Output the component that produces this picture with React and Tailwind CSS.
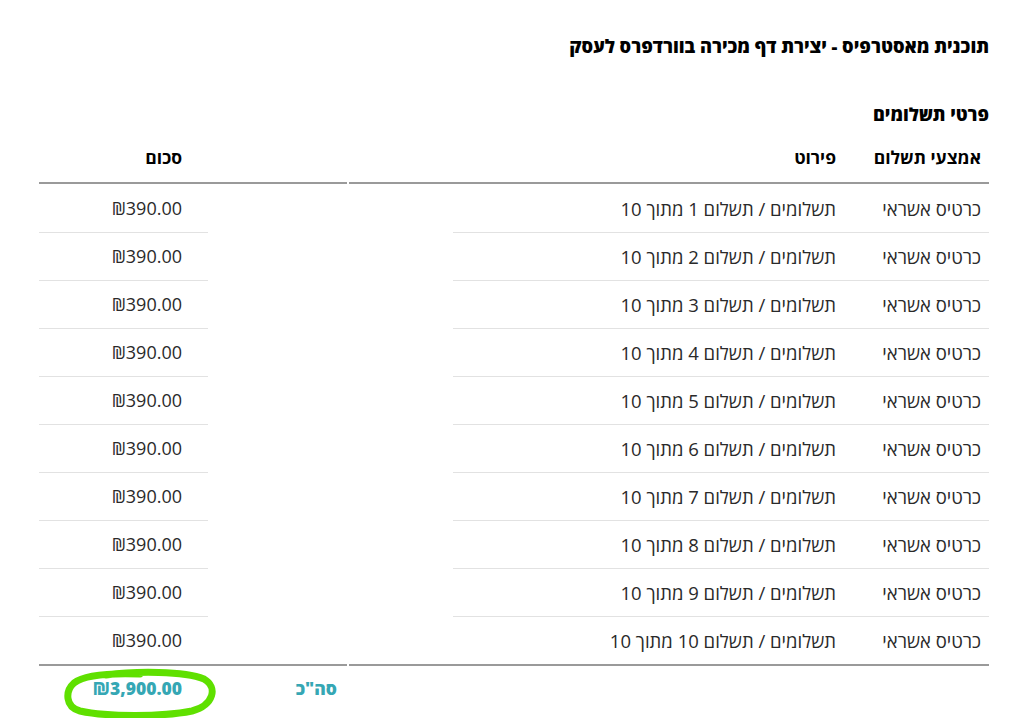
import React from "react";

const rows = Array.from({ length: 10 }, (_, i) => i + 1);

function GreenLoop() {
  return (
    <svg
      className="absolute left-[62px] top-[668px] pointer-events-none"
      width="156"
      height="50"
      viewBox="0 0 156 50"
      fill="none"
    >
      <path
        d="M44 7 C74 3 122 3 142 11 C156 19 152 37 130 43 C100 49 45 49 18 43 C3 39 3 23 12 15 C22 7 50 5 78 6"
        stroke="#5fe000"
        strokeWidth="7"
        strokeLinecap="round"
      />
    </svg>
  );
}

export default function App() {
  return (
    <div
      dir="rtl"
      className="relative w-full h-[718px] bg-white text-[#2a2a2a] overflow-hidden pr-[35px] pl-[35px]"
      style={{ fontFamily: '"Open Sans", "DejaVu Sans", sans-serif' }}
    >
      <h1 className="pt-[34px] text-[18.2px] leading-6 font-extrabold text-black">
        תוכנית מאסטרפיס - יצירת דף מכירה בוורדפרס לעסק
      </h1>
      <h2 className="mt-[44px] text-[18px] leading-6 font-extrabold text-black">
        פרטי תשלומים
      </h2>

      <div className="flex gap-[2px]">
        {/* right block: method + details */}
        <div className="w-[640px]">
          <div className="h-[58px] flex items-end pb-[13px] border-b-2 border-[#9a9a9a] text-[17.5px] leading-6 font-bold text-black">
            <div className="w-[153px] pr-[8px]">אמצעי תשלום</div>
            <div>פירוט</div>
          </div>
          {rows.map((n) => (
            <div key={n} className="h-[48px] flex flex-col">
              <div
                className={`w-[536px] h-[1px] ${n === 1 ? "bg-transparent" : "bg-[#e2e2e2]"}`}
              />
              <div className="flex-1 flex items-center text-[18.5px]">
                <div className="w-[153px] pr-[8px]">כרטיס אשראי</div>
                <div>תשלומים / תשלום {n} מתוך 10</div>
              </div>
            </div>
          ))}
          <div className="border-t-2 border-[#9a9a9a]" />
        </div>

        {/* left block: amount */}
        <div className="w-[308px]">
          <div className="h-[58px] flex items-end justify-end pb-[13px] border-b-2 border-[#9a9a9a] text-[17.5px] leading-6 font-bold text-black">
            <div className="w-[169px] pr-[26px]">סכום</div>
          </div>
          {rows.map((n) => (
            <div key={n} className="h-[48px] flex flex-col items-end">
              <div
                className={`w-[169px] h-[1px] ${n === 1 ? "bg-transparent" : "bg-[#e2e2e2]"}`}
              />
              <div className="flex-1 flex items-center w-[169px] pr-[26px] text-[18px]">
                ₪390.00
              </div>
            </div>
          ))}
          <div className="border-t-2 border-[#9a9a9a]" />
          <div className="h-[44px] flex items-center text-[17.5px] font-extrabold text-[#35a7b4]">
            <div className="w-[139px] pr-[10px]">סה"כ</div>
            <div className="w-[169px] pr-[26px]">₪3,900.00</div>
          </div>
        </div>
      </div>

      <GreenLoop />
    </div>
  );
}
